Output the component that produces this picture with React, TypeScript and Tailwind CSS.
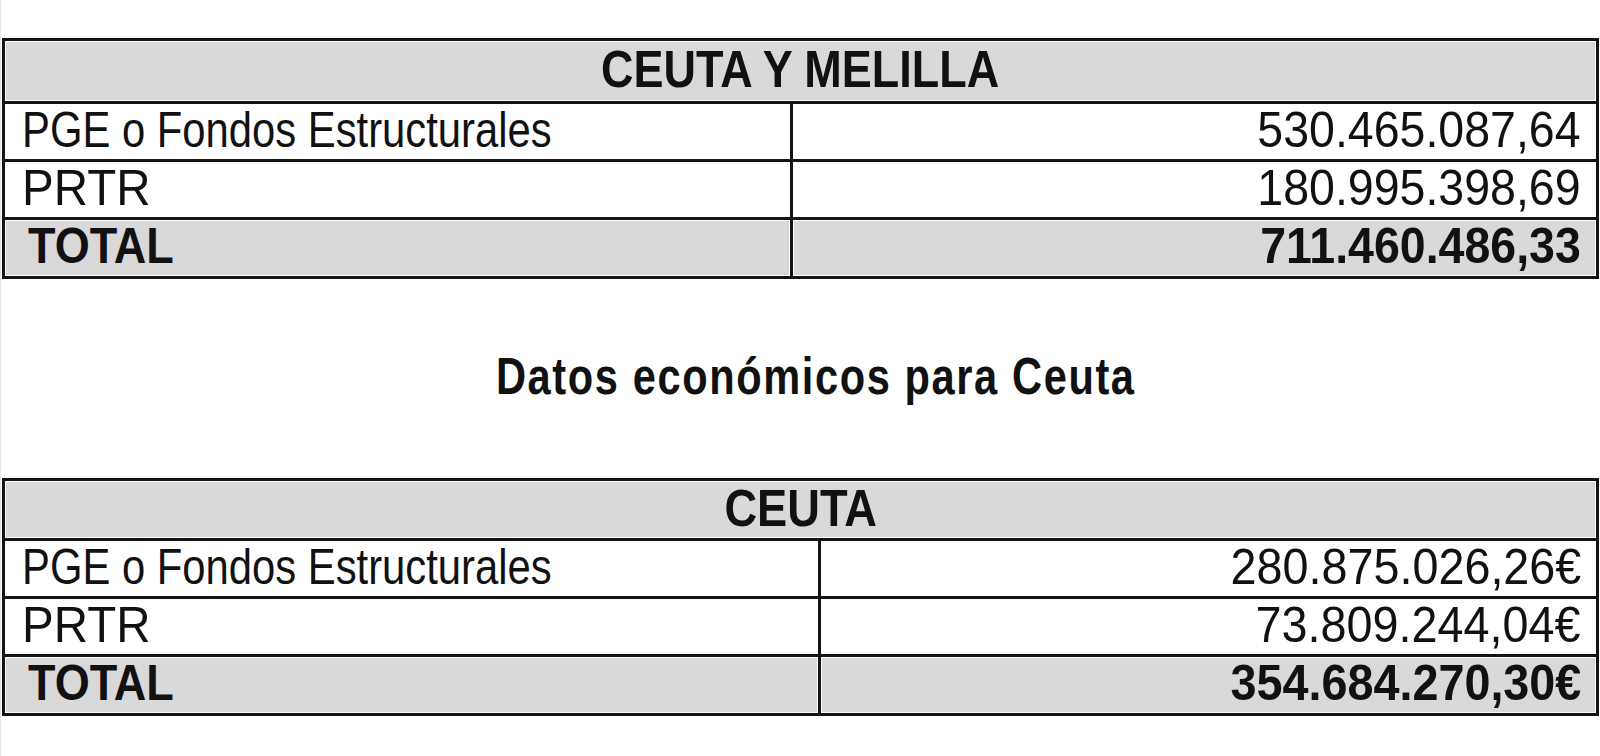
const font = { fontFamily: '"Liberation Sans", Arial, sans-serif' };

type Row = { label: string; value: string; total?: boolean };

const ceutaMelilla: Row[] = [
  { label: 'PGE o Fondos Estructurales', value: '530.465.087,64' },
  { label: 'PRTR', value: '180.995.398,69' },
  { label: 'TOTAL', value: '711.460.486,33', total: true },
];

const ceuta: Row[] = [
  { label: 'PGE o Fondos Estructurales', value: '280.875.026,26€' },
  { label: 'PRTR', value: '73.809.244,04€' },
  { label: 'TOTAL', value: '354.684.270,30€', total: true },
];

// the source image is squeezed sideways, so each text gets its own x-scale
function labelScale(label: string) {
  if (label === 'TOTAL') return 'ml-[6px] scale-x-[0.9]';
  if (label === 'PRTR') return 'scale-x-[0.95]';
  return 'scale-x-[0.836]';
}

const gray = 'bg-[#d9d9d9] shadow-[inset_0_0_0_1px_#fff]';

function FundsTable({
  title,
  rows,
  cols,
  headerH,
  titleScale,
}: {
  title: string;
  rows: Row[];
  cols: string;
  headerH: string;
  titleScale: string;
}) {
  return (
    <div className="mx-px border-[3px] border-[#141414] bg-white">
      <div className={`flex ${headerH} items-center justify-center pb-1 ${gray}`}>
        <span className={`inline-block origin-center text-[52px] font-bold leading-none text-[#111] ${titleScale}`}>
          {title}
        </span>
      </div>
      {rows.map((r) => (
        <div
          key={r.label}
          className={`grid ${cols} border-t-[3px] border-[#141414] ${r.total ? 'h-[59px]' : 'h-[58px]'}`}
        >
          <div className={`flex items-center pb-1 pl-[17px] ${r.total ? gray : ''}`}>
            <span
              className={`inline-block origin-left text-[50px] leading-none text-[#111] ${r.total ? 'font-bold' : ''} ${labelScale(r.label)}`}
            >
              {r.label}
            </span>
          </div>
          <div
            className={`flex items-center justify-end border-l-[3px] border-[#141414] pb-1 pr-[15px] ${r.total ? gray : ''}`}
          >
            <span
              className={`inline-block origin-right text-[50px] leading-none text-[#111] ${r.total ? 'font-bold' : ''} ${r.value.endsWith('€') ? 'scale-x-[0.935]' : 'scale-x-[0.93]'}`}
            >
              {r.value}
            </span>
          </div>
        </div>
      ))}
    </div>
  );
}

export default function App() {
  return (
    <div className="h-[756px] w-[1600px] overflow-hidden border-l border-[#e6e6e6] bg-white pt-[38px]" style={font}>
      <FundsTable
        title="CEUTA Y MELILLA"
        rows={ceutaMelilla}
        cols="grid-cols-[785px_1fr]"
        headerH="h-[60px]"
        titleScale="scale-x-[0.865]"
      />
      <div className="flex h-[199px] items-center justify-center pb-[6px] pl-[30px]">
        <h1 className="inline-block origin-center scale-x-[0.8] text-[52px] font-bold leading-none tracking-[2px] text-[#111]">
          Datos económicos para Ceuta
        </h1>
      </div>
      <FundsTable
        title="CEUTA"
        rows={ceuta}
        cols="grid-cols-[813px_1fr]"
        headerH="h-[57px]"
        titleScale="scale-x-[0.87]"
      />
    </div>
  );
}
